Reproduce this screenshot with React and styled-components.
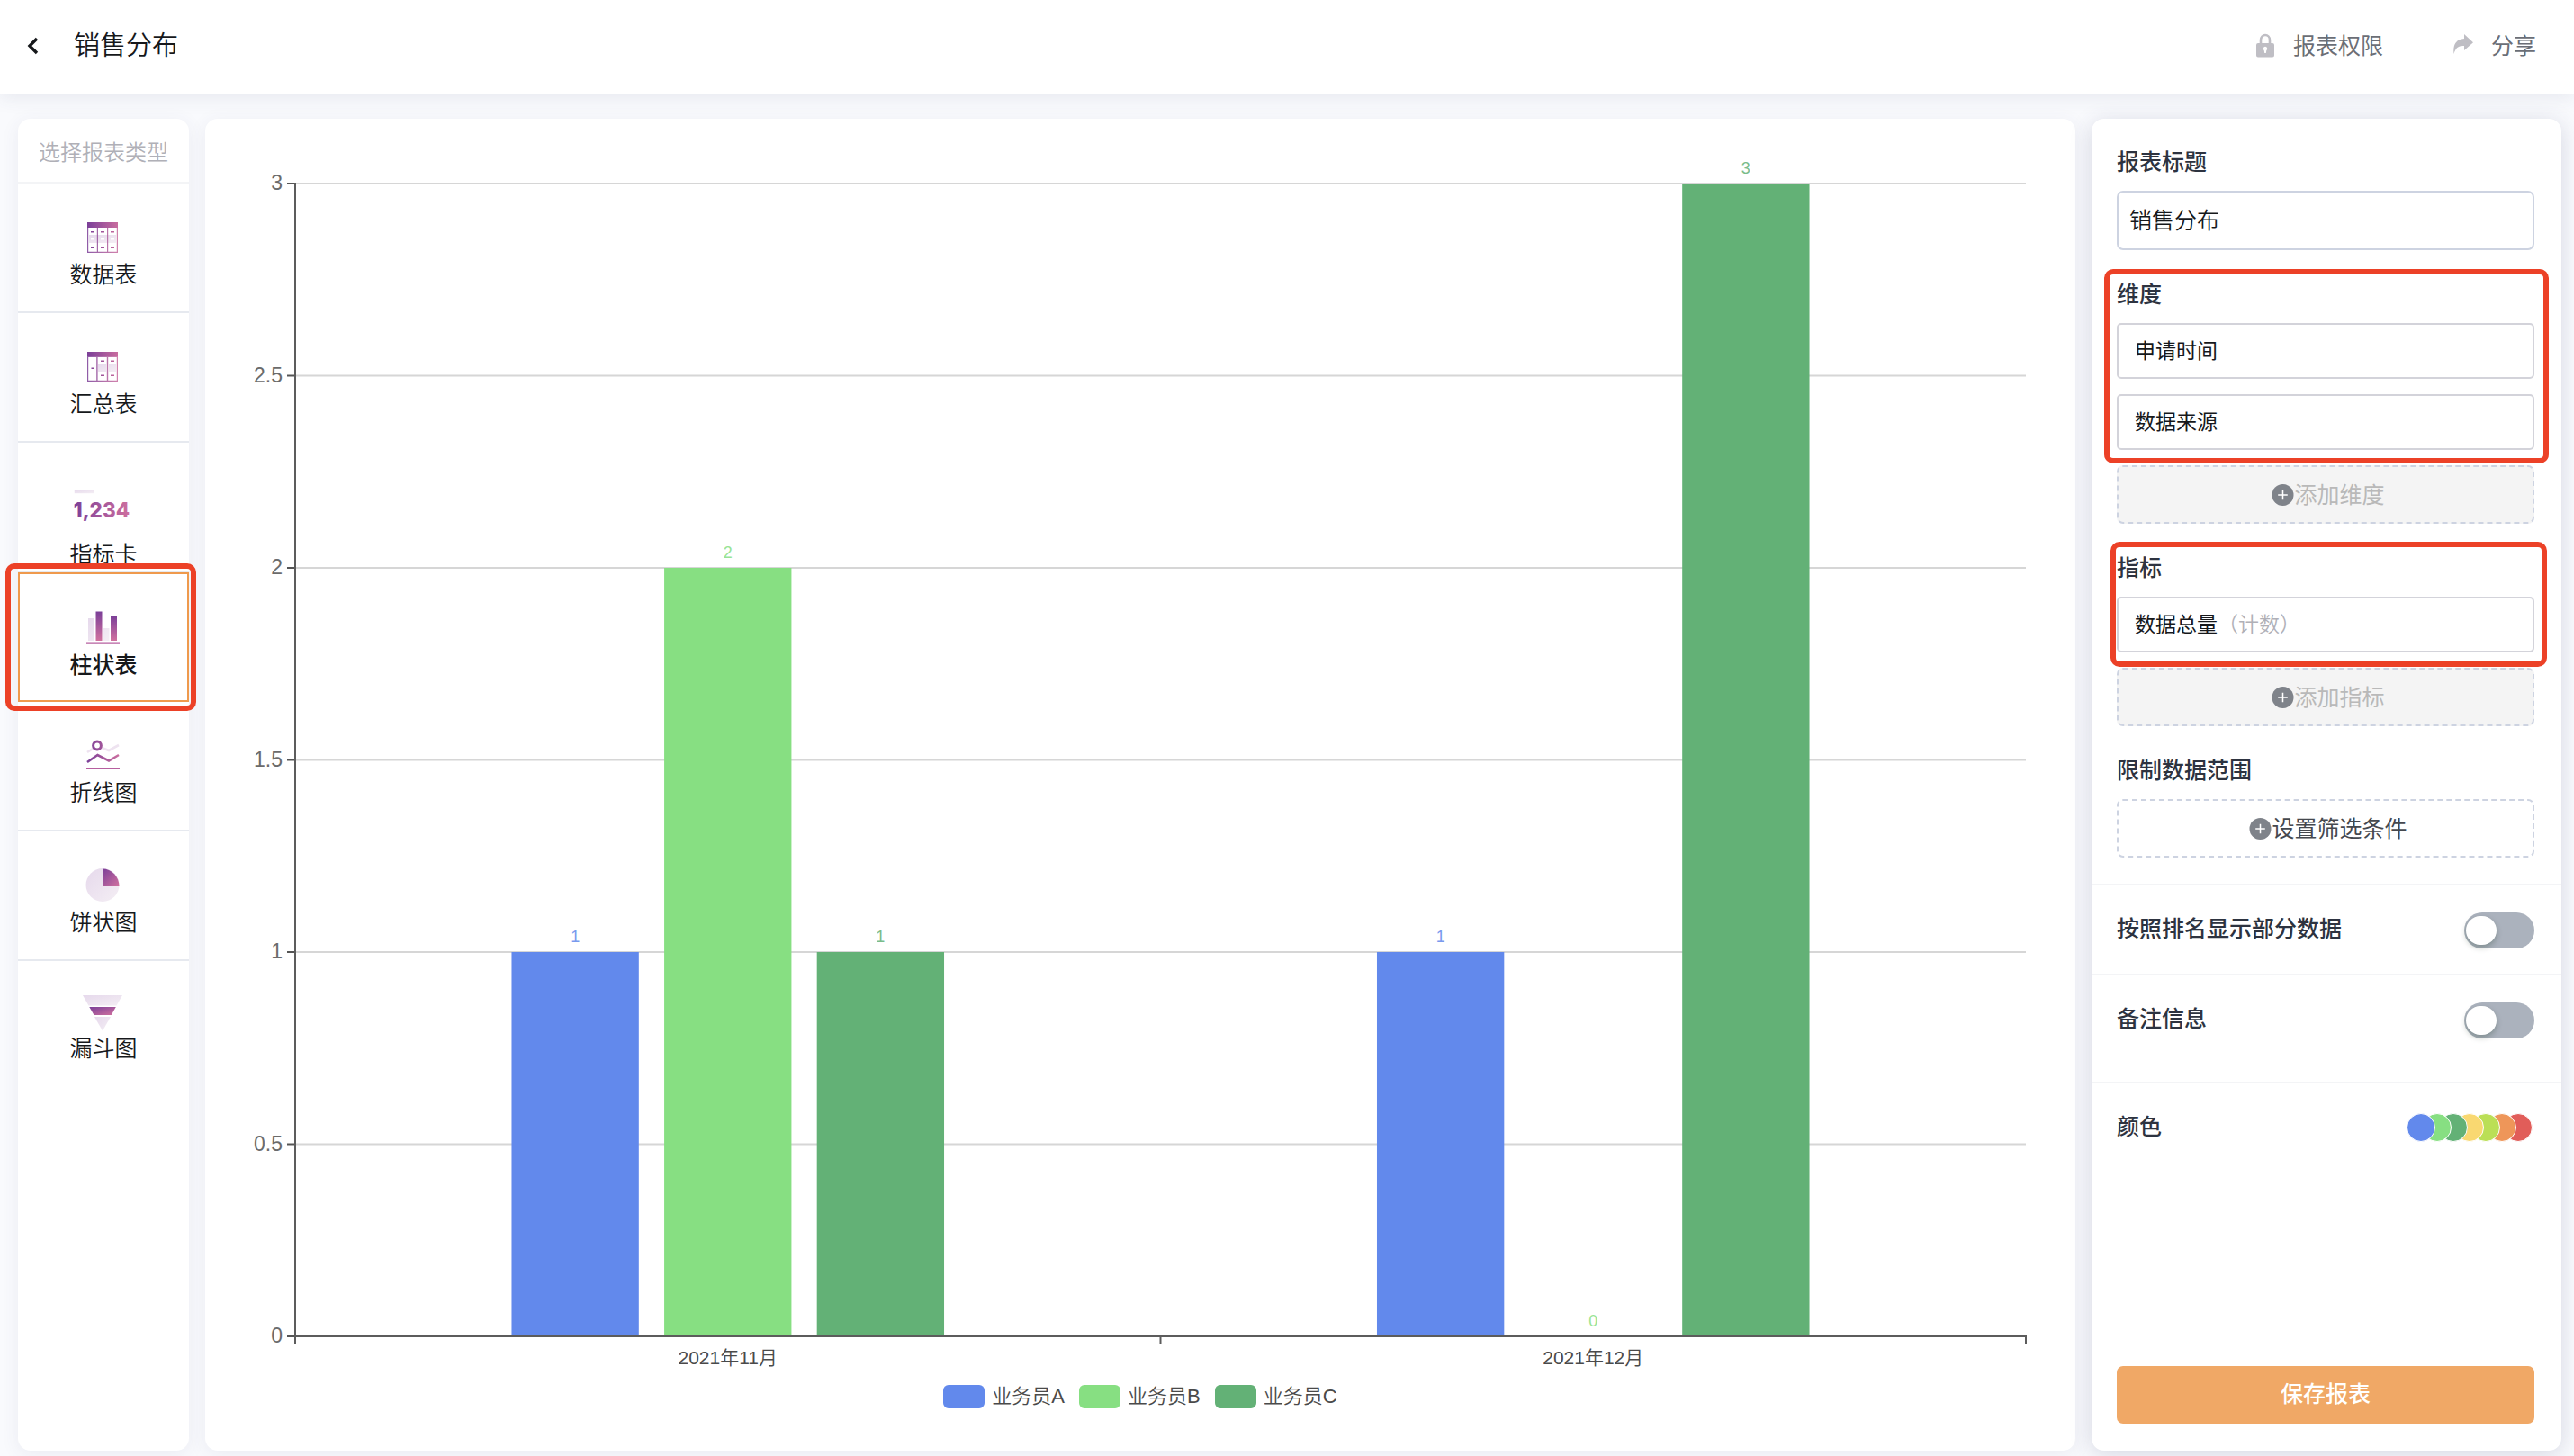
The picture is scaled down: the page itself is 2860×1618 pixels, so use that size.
import React, { useState } from "react";
import styled, { createGlobalStyle, css } from "styled-components";

const GlobalStyle = createGlobalStyle`
  *, *::before, *::after { box-sizing: border-box; }
  body {
    margin: 0;
    background: #f9fafd;
    color: #16181b;
    font-family: "Liberation Sans", "Noto Sans CJK SC", sans-serif;
    font-size: 25px;
    line-height: 36px;
  }
  button, input { font: inherit; color: inherit; }
`;

const Page = styled.div`
  min-height: 100vh;
  display: flex;
  flex-direction: column;
`;

const Header = styled.header`
  height: 104px;
  padding: 0 42px 2px 28px;
  display: flex;
  align-items: center;
  background: #fff;
  box-shadow: 0 4px 20px rgba(60, 64, 110, 0.1);
`;

const BackButton = styled.button`
  display: flex;
  padding: 0;
  border: 0;
  background: none;
  cursor: pointer;
`;

const Title = styled.h1`
  flex: 1;
  margin: 0 0 0 36px;
  font-size: 29px;
  font-weight: 350;
`;

const Actions = styled.div`
  display: flex;
  gap: 78px;
`;

const ActionButton = styled.button`
  display: flex;
  align-items: center;
  gap: 20px;
  padding: 0;
  border: 0;
  background: none;
  color: #6b6e76;
  cursor: pointer;
`;

const Main = styled.main`
  flex: 1;
  display: flex;
  gap: 18px;
  padding: 28px 14px 6px 20px;
`;

const card = css`
  background: #fff;
  border-radius: 14px;
  box-shadow: 0 4px 20px rgba(60, 64, 110, 0.08);
`;

const TypeList = styled.nav`
  ${card}
  width: 190px;
  flex: none;
`;

const TypeHeading = styled.h2`
  margin: 0;
  height: 72px;
  border-bottom: 2px solid #f3f4f6;
  text-align: center;
  font-size: 24px;
  line-height: 76px;
  font-weight: 350;
  white-space: nowrap;
  color: #b0b0b7;
`;

const TypeItem = styled.button`
  position: relative;
  width: 100%;
  height: 144px;
  padding: 23px 0 0;
  display: flex;
  flex-direction: column;
  align-items: center;
  border: 0 solid #e6e9ef;
  border-bottom-width: 2px;
  background: #fff;
  font-weight: 350;
  cursor: pointer;
  ${(p) => p.$selected && css`
    border: 2px solid #ef9a4d;
    font-weight: 500;
  `}
  &:last-child { border-bottom: 0; background: none; }
`;

const Outline = styled.span`
  position: absolute;
  z-index: 1;
  inset: ${(p) => p.$inset};
  border: 6px solid #ec4127;
  border-radius: 10px;
  pointer-events: none;
`;

const ChartCard = styled.section`
  ${card}
  flex: 1;
  min-width: 0;
  display: flex;
  flex-direction: column;
`;

const Plot = styled.svg`
  display: block;
  width: 100%;
  flex: 1;
  min-height: 0;
  font-size: 23px;
  fill: #6b6b6b;
`;

const Legend = styled.ul`
  margin: 0;
  padding: 0 0 42px;
  list-style: none;
  display: flex;
  justify-content: center;
  gap: 16px;
  font-size: 22px;
  font-weight: 350;
  color: #4a4a4a;
`;

const LegendItem = styled.li`
  display: flex;
  align-items: center;
  gap: 8px;
  &::before {
    content: "";
    width: 46px;
    height: 26px;
    border-radius: 6px;
    background: ${(p) => p.$color};
  }
`;

const Panel = styled.form`
  ${card}
  width: 522px;
  flex: none;
  padding: 30px 0;
  display: flex;
  flex-direction: column;
  box-shadow: 0 4px 24px rgba(50, 56, 100, 0.18);
`;

const Field = styled.section`
  position: relative;
  padding: 0 30px 0 28px;
  margin-bottom: 31px;
  display: flex;
  flex-direction: column;
  &:last-of-type { margin-bottom: 29px; }
`;

const labelText = css`
  margin: 0;
  font-size: 25px;
  line-height: 36px;
  font-weight: 500;
  color: #2d3340;
`;

const Label = styled.label`
  ${labelText}
  margin-bottom: 14px;
`;

const Heading = styled.h2`
  ${labelText}
  margin-bottom: 14px;
`;

const TextInput = styled.input`
  height: 66px;
  padding: 0 12px 4px;
  border: 2px solid #cdd3e1;
  border-radius: 7px;
  background: #fff;
  font-weight: 350;
`;

const Chip = styled.button`
  height: 62px;
  margin-bottom: 17px;
  padding: 0 18px;
  border: 2px solid #d3d3da;
  border-radius: 5px;
  background: #fff;
  font-size: 23px;
  text-align: left;
`;

const Muted = styled.span`
  color: #b0b0b7;
  font-weight: 350;
`;

const AddButton = styled.button`
  height: 65px;
  padding: 0 0 0 6px;
  display: flex;
  align-items: center;
  justify-content: center;
  border: 2px dashed #cdd3e1;
  border-radius: 7px;
  background: #fff;
  color: #45484e;
  &:disabled {
    background: #f4f4f4;
    color: #b9b9b9;
  }
`;

const Row = styled.div`
  height: ${(p) => p.$height};
  padding: 30px 30px 0 28px;
  display: flex;
  justify-content: space-between;
  align-items: flex-start;
  border-top: 2px solid #f3f4f6;
`;

const RowLabel = styled.label`
  ${labelText}
`;

const RowTitle = styled.h2`
  ${labelText}
`;

const Switch = styled.input`
  appearance: none;
  margin: 0;
  width: 78px;
  height: 40px;
  padding: 4px 2px;
  border-radius: 20px;
  background: #abb2bd;
  cursor: pointer;
  &::before {
    content: "";
    display: block;
    width: 34px;
    height: 32px;
    border-radius: 16px;
    background: #fff;
    box-shadow: 0 3px 6px rgba(0, 35, 11, 0.25);
  }
  &:checked { background: #f0a866; }
  &:checked::before { margin-left: 40px; }
`;

const Swatches = styled.button`
  display: flex;
  padding: 3px 2px 0 0;
  border: 0;
  background: none;
  cursor: pointer;
`;

const Swatch = styled.span`
  width: 32px;
  height: 32px;
  margin-left: -14px;
  border: 1px solid #fff;
  border-radius: 50%;
  background: ${(p) => p.$color};
  z-index: ${(p) => p.$level};
`;

const SaveButton = styled.button`
  height: 64px;
  margin: auto 30px 0 28px;
  padding: 0 0 2px;
  border: 0;
  border-radius: 7px;
  background: #f0a866;
  color: #fff;
  font-weight: 500;
  cursor: pointer;
`;

const PURPLE = "#7b3f98";
const PINK = "#d1719f";

function Gradients() {
  return (
    <svg width="0" height="0" style={{ position: "absolute" }} aria-hidden="true">
      <defs>
        <linearGradient id="across" gradientUnits="userSpaceOnUse" x1="12" y1="0" x2="50" y2="0">
          <stop offset="0" stopColor={PURPLE} />
          <stop offset="1" stopColor={PINK} />
        </linearGradient>
        <linearGradient id="down" x1="0" y1="0" x2="0" y2="1">
          <stop offset="0" stopColor={PURPLE} />
          <stop offset="1" stopColor={PINK} />
        </linearGradient>
        <linearGradient id="diagonal" x1="0" y1="0" x2="1" y2="1">
          <stop offset="0" stopColor={PURPLE} />
          <stop offset="1" stopColor={PINK} />
        </linearGradient>
        <linearGradient id="pale" x1="0" y1="0" x2="1" y2="1">
          <stop offset="0" stopColor="#e6d9ec" />
          <stop offset="1" stopColor="#f4eef4" />
        </linearGradient>
        <linearGradient id="digits" gradientUnits="userSpaceOnUse" x1="0" y1="0" x2="66" y2="0">
          <stop offset="0" stopColor={PURPLE} />
          <stop offset="1" stopColor={PINK} />
        </linearGradient>
      </defs>
    </svg>
  );
}

const TableIcon = () => (
  <svg width="60" height="60" viewBox="0 0 60 60" aria-hidden="true">
    <path d="M14 34h30v9H14z" fill="url(#pale)" />
    <path d="M12 20h34v34H12zM13.2 26v26.8h9.6V26zM24 26v26.8h10V26zM35.2 26v26.8h9.6V26z" fill="url(#across)" fillRule="evenodd" opacity="0.85" />
    <path d="M12 20h34v6H12z" fill="url(#across)" />
    <path d="M16 30h4v1.4h-4zM27 30h4v1.4h-4zM38 30h4v1.4h-4zM16 47.500h4v1.4h-4zM27 47.500h4v1.4h-4zM38 47.500h4v1.4h-4z" fill="url(#across)" />
    <path d="M16 38h4v1.4h-4zM27 38h4v1.4h-4zM38 38h4v1.4h-4z" fill="#fff" />
  </svg>
);

const SummaryIcon = () => (
  <svg width="60" height="60" viewBox="0 0 60 60" aria-hidden="true">
    <path d="M24 34h9v8h-9zM36 34h8v8h-8z" fill="url(#pale)" />
    <path d="M12 20h34v33H12zM13.2 26v25.8h9V26zM23.6 26v25.8h10.2V26zM35.2 26v25.8h9.6V26z" fill="url(#across)" fillRule="evenodd" opacity="0.85" />
    <path d="M12 20h34v5H12z" fill="url(#across)" />
    <path d="M16.500 37.500h3v1.6h-3zM27 29.500h4v1.4h-4zM38 29.500h4v1.4h-4zM27 45.500h4v1.4h-4zM38 45.500h4v1.4h-4z" fill="url(#across)" />
  </svg>
);

const MetricIcon = () => (
  <svg width="68" height="85" viewBox="0 0 68 85" aria-hidden="true">
    <path d="M1 30h22v4H1z" fill="url(#pale)" />
    <text x="0" y="61" fontFamily="Inter, sans-serif" fontSize="23" fontWeight="800" fill="url(#digits)">1,234</text>
  </svg>
);

const BarsIcon = () => (
  <svg width="60" height="60" viewBox="0 0 60 60" aria-hidden="true">
    <path d="M13 26h7v25h-7zM29.500 37h7v14h-7z" fill="url(#pale)" />
    <path d="M21.500 18.500h7V51h-7z" fill="url(#down)" />
    <path d="M38 23.500h7V51h-7z" fill="url(#down)" />
    <path d="M11 52.500h37v2.200H11z" fill="#b65f9f" />
  </svg>
);

const LineIcon = () => (
  <svg width="60" height="60" viewBox="0 0 60 60" fill="none" strokeWidth="2.600" aria-hidden="true">
    <path d="M12 33l11-7 13 5 11-6" stroke="#eee3f0" />
    <path d="M12 44l11.500-8L36 42.500 47 36" stroke="url(#across)" />
    <circle cx="23" cy="25.500" r="4.400" fill="#fff" stroke="url(#across)" strokeWidth="3" />
    <path d="M11 51h37" stroke="#b65f9f" strokeWidth="2" />
  </svg>
);

const PieIcon = () => (
  <svg width="60" height="60" viewBox="0 0 60 60" aria-hidden="true">
    <circle cx="29" cy="36.500" r="18.500" fill="url(#pale)" />
    <path d="M29 18.500a18.500 19.500 0 0 1 18.500 19.500H29z" fill="url(#diagonal)" />
  </svg>
);

const FunnelIcon = () => (
  <svg width="60" height="56" viewBox="0 0 60 56" aria-hidden="true">
    <path d="M7 15h44l-6.500 11.500h-31z" fill="url(#pale)" />
    <path d="M14.300 28h29.500l-5 9H19.500z" fill="url(#diagonal)" />
    <path d="M20 39h18l-9 15.500z" fill="url(#pale)" />
  </svg>
);

const PlusIcon = () => (
  <svg width="25" height="26" viewBox="0 0 26 26" aria-hidden="true">
    <circle cx="13" cy="13" r="12.500" fill="#7f838a" />
    <path d="M13 7.500v11M7.500 13h11" stroke="#fff" strokeWidth="1.600" />
  </svg>
);

const types = [
  { name: "数据表", Icon: TableIcon },
  { name: "汇总表", Icon: SummaryIcon },
  { name: "指标卡", Icon: MetricIcon },
  { name: "柱状表", Icon: BarsIcon, marked: true },
  { name: "折线图", Icon: LineIcon },
  { name: "饼状图", Icon: PieIcon },
  { name: "漏斗图", Icon: FunnelIcon },
];

const series = [
  { name: "业务员A", color: "#6289ec", values: [1, 1] },
  { name: "业务员B", color: "#87df82", values: [2, 0] },
  { name: "业务员C", color: "#63b176", values: [1, 3] },
];
const months = ["2021年11月", "2021年12月"];
const ticks = [0, 0.5, 1, 1.5, 2, 2.5, 3];
const palette = ["#6289ec", "#87df82", "#63b176", "#f9d871", "#bbdf56", "#ee9659", "#e15d59"];

const LEFT = 100;
const RIGHT = 2023;
const BASE = 1353;
const UNIT = 427;
const BAND = (RIGHT - LEFT) / months.length;
const BAR = BAND * 0.147;
const STEP = BAND * 0.1764;

function BarChart() {
  return (
    <Plot viewBox="0 0 2078 1402" role="img" aria-label="销售分布">
      {ticks.map((t) => {
        const y = BASE - t * UNIT;
        return (
          <g key={t}>
            {t > 0 && <path d={`M${LEFT} ${y}H${RIGHT}`} stroke="#d6d6d6" strokeWidth="2" />}
            <path d={`M${LEFT - 9} ${y}H${LEFT}`} stroke="#555" strokeWidth="2" />
            <text x={LEFT - 14} y={y + 7} textAnchor="end">{t}</text>
          </g>
        );
      })}
      {months.map((m, i) => {
        const center = LEFT + (i + 0.5) * BAND;
        return (
          <g key={m}>
            {series.map((s, j) => {
              const x = center + (j - 1) * STEP;
              const y = BASE - s.values[i] * UNIT;
              return (
                <g key={s.name} fill={s.color}>
                  <rect x={x - BAR / 2} y={y} width={BAR} height={BASE - y} />
                  <text x={x} y={y - 11} fontSize="18" textAnchor="middle" opacity="0.85">{s.values[i]}</text>
                </g>
              );
            })}
            <text x={center} y={BASE + 31} fontSize="21" fontWeight="350" fill="#4a4a4a" textAnchor="middle">{m}</text>
          </g>
        );
      })}
      <path
        d={`M${LEFT} ${BASE - 3 * UNIT - 1}V${BASE + 9}M${LEFT} ${BASE}H${RIGHT}V${BASE + 9}M${LEFT + BAND} ${BASE}v9`}
        fill="none"
        stroke="#5c5c5c"
        strokeWidth="2"
      />
    </Plot>
  );
}

export default function App() {
  const [selected, setSelected] = useState("柱状表");
  return (
    <Page>
      <GlobalStyle />
      <Gradients />
      <Header>
        <BackButton aria-label="返回">
          <svg width="18" height="22" viewBox="0 0 18 22" fill="none" stroke="#16181b" strokeWidth="3.400" aria-hidden="true">
            <path d="M13 3L5 11l8 8" />
          </svg>
        </BackButton>
        <Title>销售分布</Title>
        <Actions>
          <ActionButton>
            <svg width="22" height="28" viewBox="0 0 22 28" aria-hidden="true">
              <path d="M6 12V7.500a5 5.500 0 0 1 10 0V12" fill="none" stroke="#bfbec4" strokeWidth="2.600" />
              <path d="M3 11h16q2 0 2 2v11.500q0 2-2 2H3q-2 0-2-2V13q0-2 2-2zM11 14.800a2.400 2.400 0 0 0-1.300 4.300l.5 3h1.600l.5-3a2.400 2.400 0 0 0-1.300-4.300z" fill="#bfbec4" fillRule="evenodd" />
            </svg>
            报表权限
          </ActionButton>
          <ActionButton>
            <svg width="22" height="28" viewBox="0 0 22 28" aria-hidden="true">
              <path d="M12 1l10 9.200L12 19v-5C6 13.500 2.500 16 .5 23-.5 14 2 6.500 12 6z" fill="#bfbec4" />
            </svg>
            分享
          </ActionButton>
        </Actions>
      </Header>
      <Main>
        <TypeList aria-label="选择报表类型">
          <TypeHeading>选择报表类型</TypeHeading>
          {types.map(({ name, Icon, marked }) => (
            <TypeItem key={name} $selected={selected === name} onClick={() => setSelected(name)}>
              <Icon />
              {name}
              {marked && <Outline $inset="-12px -10px -12px -16px" />}
            </TypeItem>
          ))}
        </TypeList>
        <ChartCard>
          <BarChart />
          <Legend>
            {series.map((s) => (
              <LegendItem key={s.name} $color={s.color}>{s.name}</LegendItem>
            ))}
          </Legend>
        </ChartCard>
        <Panel onSubmit={(e) => e.preventDefault()}>
          <Field>
            <Label htmlFor="report-title">报表标题</Label>
            <TextInput id="report-title" defaultValue="销售分布" />
          </Field>
          <Field>
            <Heading>维度</Heading>
            <Chip type="button">申请时间</Chip>
            <Chip type="button">数据来源</Chip>
            <AddButton type="button" disabled><PlusIcon />添加维度</AddButton>
            <Outline $inset="-10px 14px 67px 14px" />
          </Field>
          <Field>
            <Heading>指标</Heading>
            <Chip type="button">数据总量<Muted>（计数）</Muted></Chip>
            <AddButton type="button" disabled><PlusIcon />添加指标</AddButton>
            <Outline $inset="-11px 16px 66px 21px" />
          </Field>
          <Field>
            <Heading>限制数据范围</Heading>
            <AddButton type="button"><PlusIcon />设置筛选条件</AddButton>
          </Field>
          <Row $height="100px">
            <RowLabel htmlFor="rank">按照排名显示部分数据</RowLabel>
            <Switch id="rank" type="checkbox" />
          </Row>
          <Row $height="120px">
            <RowLabel htmlFor="remark">备注信息</RowLabel>
            <Switch id="remark" type="checkbox" />
          </Row>
          <Row $height="100px">
            <RowTitle>颜色</RowTitle>
            <Swatches type="button" aria-label="颜色">
              {palette.map((c, i) => (
                <Swatch key={c} $color={c} $level={palette.length - i} />
              ))}
            </Swatches>
          </Row>
          <SaveButton type="submit">保存报表</SaveButton>
        </Panel>
      </Main>
    </Page>
  );
}
